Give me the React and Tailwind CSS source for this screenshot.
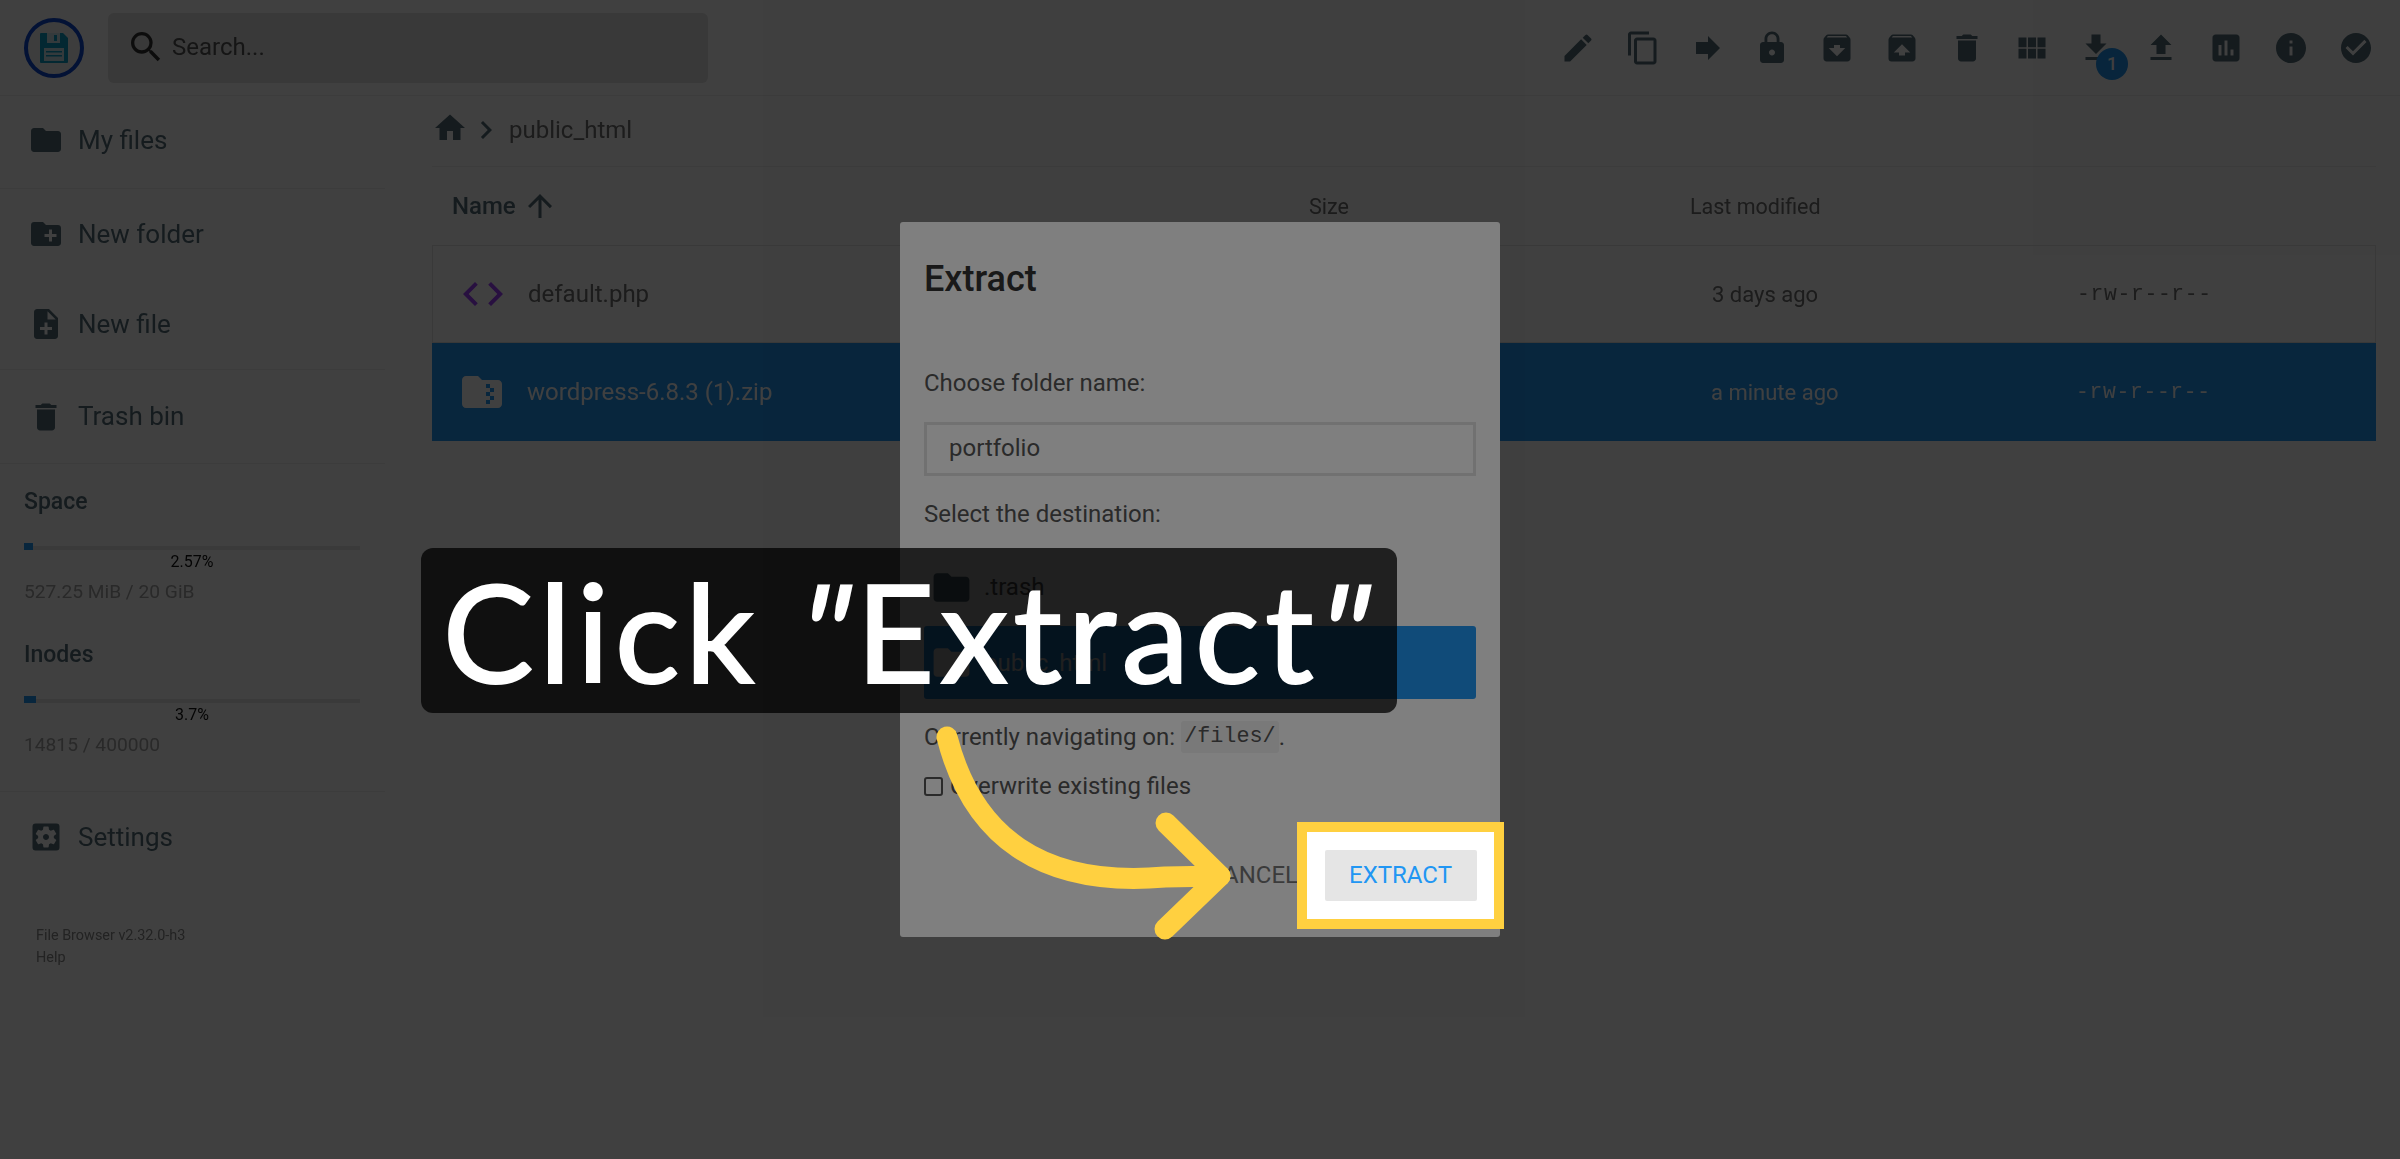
import React from "react";
import {
  MdEdit, MdContentCopy, MdForward, MdLock, MdArchive, MdUnarchive, MdDelete, MdViewModule,
  MdFileDownload, MdFileUpload, MdInsertChart, MdInfo, MdCheckCircle, MdFolder, MdCreateNewFolder,
  MdNoteAdd, MdSettingsApplications, MdHome, MdChevronRight, MdArrowUpward, MdSearch, MdCode, MdFolderZip,
} from "react-icons/md";

const tools = [MdEdit, MdContentCopy, MdForward, MdLock, MdArchive, MdUnarchive, MdDelete, MdViewModule, MdFileDownload, MdFileUpload, MdInsertChart, MdInfo, MdCheckCircle];

function Logo() {
  return (
    <div className="flex h-[60px] w-[60px] items-center justify-center rounded-full border-[4px] border-[#0d47d1] bg-[#f2f2f2]">
      <svg width="28" height="30" viewBox="0 0 28 30">
        <path d="M0 1a1 1 0 0 1 1-1h22l5 5v24a1 1 0 0 1-1 1H1a1 1 0 0 1-1-1z" fill="#0f9fc8" />
        <rect x="7" y="0" width="13" height="10" fill="#cfe8ef" />
        <rect x="14" y="2" width="3" height="6" fill="#0f9fc8" />
        <rect x="4" y="15" width="20" height="13" fill="#cfe8ef" />
        <rect x="6" y="18" width="16" height="1.5" fill="#0f9fc8" />
        <rect x="6" y="22" width="16" height="1.5" fill="#0f9fc8" />
      </svg>
    </div>
  );
}

function SideItem({ icon: Icon, label, className = "" }) {
  return (
    <div className={`flex h-[90px] items-center pl-[28px] text-[26px] text-[#546e7a] ${className}`}>
      <Icon size={36} className="shrink-0" />
      <span className="ml-[14px]">{label}</span>
    </div>
  );
}

function Usage({ title, percent, width, detail, top }) {
  return (
    <div className={top}>
      <div className="h-[32px] text-[23px] leading-[32px] font-medium text-[#546e7a]">{title}</div>
      <div className="mt-[25px] flex h-[7px] w-[336px] items-start">
        <div className={`h-[7px] bg-[#2196f3] ${width}`} />
        <div className="mt-[3px] h-[4px] flex-1 bg-[#e8e8e8]" />
      </div>
      <div className="mt-[2px] h-[20px] w-[336px] text-center text-[16px] leading-[20px] text-[#111]">{percent}</div>
      <div className="mt-[5px] h-[30px] text-[19.2px] leading-[30px] text-[#a5a5a5]">{detail}</div>
    </div>
  );
}

function Row({ icon, name, date, selected }) {
  const tone = selected ? "bg-[#2196f3] text-white" : "border border-[#e4e4e4] text-[#6f6f6f]";
  return (
    <div className={`flex h-[98px] items-center ${tone}`}>
      <div className="flex w-[1279px] items-center pl-[26px]">
        {icon}
        <span className="ml-[21px] text-[24px]">{name}</span>
      </div>
      <span className="w-[365px] text-[22px]">{date}</span>
      <span className="pt-[2px] text-[21.3px] tracking-[0.7px] [font-family:'Liberation_Mono',monospace]">-rw-r--r--</span>
    </div>
  );
}

export default function App() {
  return (
    <div className="relative h-[1159px] w-full overflow-hidden bg-white [font-family:Roboto,sans-serif]">
      <div className="absolute inset-0 blur-[0.5px]">
        <header className="flex h-[96px] items-center border-b border-[#eeeeee] pr-[12px] pl-[24px]">
          <Logo />
          <div className="ml-[24px] flex h-[70px] w-[600px] items-center rounded-[6px] bg-[#e2e2e2] pb-[2px] pl-[18px]">
            <MdSearch size={40} className="text-[#333]" />
            <span className="ml-[6px] text-[24px] text-[#555]">Search...</span>
          </div>
          <div className="ml-auto flex">
            {tools.map((Icon, i) => (
              <div key={i} className="relative flex h-[64px] w-[64.8px] items-center justify-center text-[#546e7a]">
                <Icon size={36} />
                {i === 8 && (
                  <span className="absolute top-[32px] left-[32px] flex h-[32px] w-[32px] items-center justify-center rounded-full bg-[#2196f3] text-[18px] font-medium text-white">1</span>
                )}
              </div>
            ))}
          </div>
        </header>

        <div className="flex">
          <aside className="w-[385px] shrink-0">
            <div className="border-b border-[#eeeeee]">
              <SideItem icon={MdFolder} label="My files" className="h-[92px] pb-[4px]" />
            </div>
            <div className="border-b border-[#eeeeee]">
              <SideItem icon={MdCreateNewFolder} label="New folder" />
              <SideItem icon={MdNoteAdd} label="New file" />
            </div>
            <div className="border-b border-[#eeeeee]">
              <SideItem icon={MdDelete} label="Trash bin" className="h-[93px]" />
            </div>
            <div className="border-b border-[#eeeeee] pb-[31px] pl-[24px]">
              <Usage title="Space" percent="2.57%" width="w-[2.57%]" detail="527.25 MiB / 20 GiB" top="pt-[22px]" />
              <Usage title="Inodes" percent="3.7%" width="w-[3.7%]" detail="14815 / 400000" top="pt-[32px]" />
            </div>
            <SideItem icon={MdSettingsApplications} label="Settings" />
            <div className="mt-[43px] pl-[36px] text-[14.4px] leading-[21.5px] text-[#8a8a8a]">
              <div>File Browser v2.32.0-h3</div>
              <div>Help</div>
            </div>
          </aside>

          <main className="ml-[47px] w-[1944px]">
            <div className="flex h-[71px] items-center border-b border-[#eeeeee] pb-[2px]">
              <MdHome size={36} className="-mt-[5px] text-[#546e7a]" />
              <MdChevronRight size={36} className="text-[#546e7a]" />
              <span className="ml-[5px] text-[24px] text-[#6f6f6f]">public_html</span>
            </div>
            <div className="flex h-[78px] items-center text-[21.5px] text-[#6f6f6f]">
              <div className="flex w-[877px] items-center pl-[20px] text-[24px] font-medium text-[#546e7a]">
                <span>Name</span>
                <MdArrowUpward size={36} className="ml-[6px]" />
              </div>
              <span className="w-[381px] pt-[2px]">Size</span>
              <span className="pt-[2px]">Last modified</span>
            </div>
            <Row icon={<MdCode size={48} className="text-[#a040ff]" />} name="default.php" date="3 days ago" />
            <Row icon={<MdFolderZip size={48} className="text-white" />} name="wordpress-6.8.3 (1).zip" date="a minute ago" selected />
          </main>
        </div>

        <div className="absolute inset-0 bg-black/50" />

        <section className="absolute top-[222px] left-[900px] h-[715px] w-[600px] rounded-[3px] bg-white px-[24px] pt-[35px] text-[24px] text-[#555]">
          <h2 className="h-[44px] text-[36px] leading-[44px] font-medium text-[#333]">Extract</h2>
          <p className="mt-[66px] h-[32px] leading-[32px]">Choose folder name:</p>
          <div className="mt-[23px] flex h-[54px] items-center border-[3px] border-[#e2e2e2] pb-[2px] pl-[22px] text-[#555]">portfolio</div>
          <p className="mt-[22px] h-[32px] leading-[32px]">Select the destination:</p>
          <div className="mt-[23px] flex h-[73px] items-center pb-[5px] pl-[6px]">
            <MdFolder size={43} className="text-[#546e7a]" />
            <span className="ml-[11px]">.trash</span>
          </div>
          <div className="flex h-[73px] items-center rounded-[3px] bg-[#2196f3] pl-[6px]">
            <MdFolder size={43} className="text-white" />
            <span className="ml-[11px] text-white">public_html</span>
          </div>
          <p className="mt-[22px] flex h-[32px] items-center">
            Currently navigating on:
            <code className="ml-[6px] flex h-[32px] items-center rounded-[3px] bg-[#f2f2f2] px-[3px] text-[21.8px] [font-family:'Liberation_Mono',monospace]">/files/</code>.
          </p>
          <div className="mt-[17px] flex h-[32px] items-center">
            <span className="h-[19px] w-[19px] rounded-[3px] border-[2px] border-[#555]" />
            <span className="ml-[7px]">Overwrite existing files</span>
          </div>
          <div className="mt-[47px] flex h-[51px] items-center justify-end pr-[178px] text-[24px] font-normal text-[#777]">CANCEL</div>
        </section>

        <div className="absolute inset-0 bg-black/50" />
      </div>

      <div className="absolute top-[548px] left-[421px] flex h-[165px] w-[976px] items-center justify-center rounded-[12px] bg-black/75 text-[136px] leading-none tracking-[5.5px] text-white [font-family:Lato,sans-serif] [-webkit-text-stroke:2px_white]">
        Click&nbsp;<span className="inline-block -skew-x-12">"</span>Extract<span className="inline-block -skew-x-12">"</span>
      </div>

      <div className="absolute top-[822px] left-[1297px] flex h-[107px] w-[207px] items-center justify-center border-[10px] border-[#ffd040] bg-white">
        <div className="flex h-[51px] w-[152px] items-center justify-center rounded-[2px] bg-[#e5e5e5] pb-[2px] text-[24px] font-normal text-[#2196f3]">EXTRACT</div>
      </div>

      <svg className="absolute top-0 left-0" width="2400" height="1159" fill="none" stroke="#ffd040" strokeWidth="21" strokeLinecap="round" strokeLinejoin="round">
        <path d="M947 737C972 835 1040 888 1165 877L1220 876" />
        <path d="M1166 823L1220 876L1165 929" />
      </svg>
    </div>
  );
}
